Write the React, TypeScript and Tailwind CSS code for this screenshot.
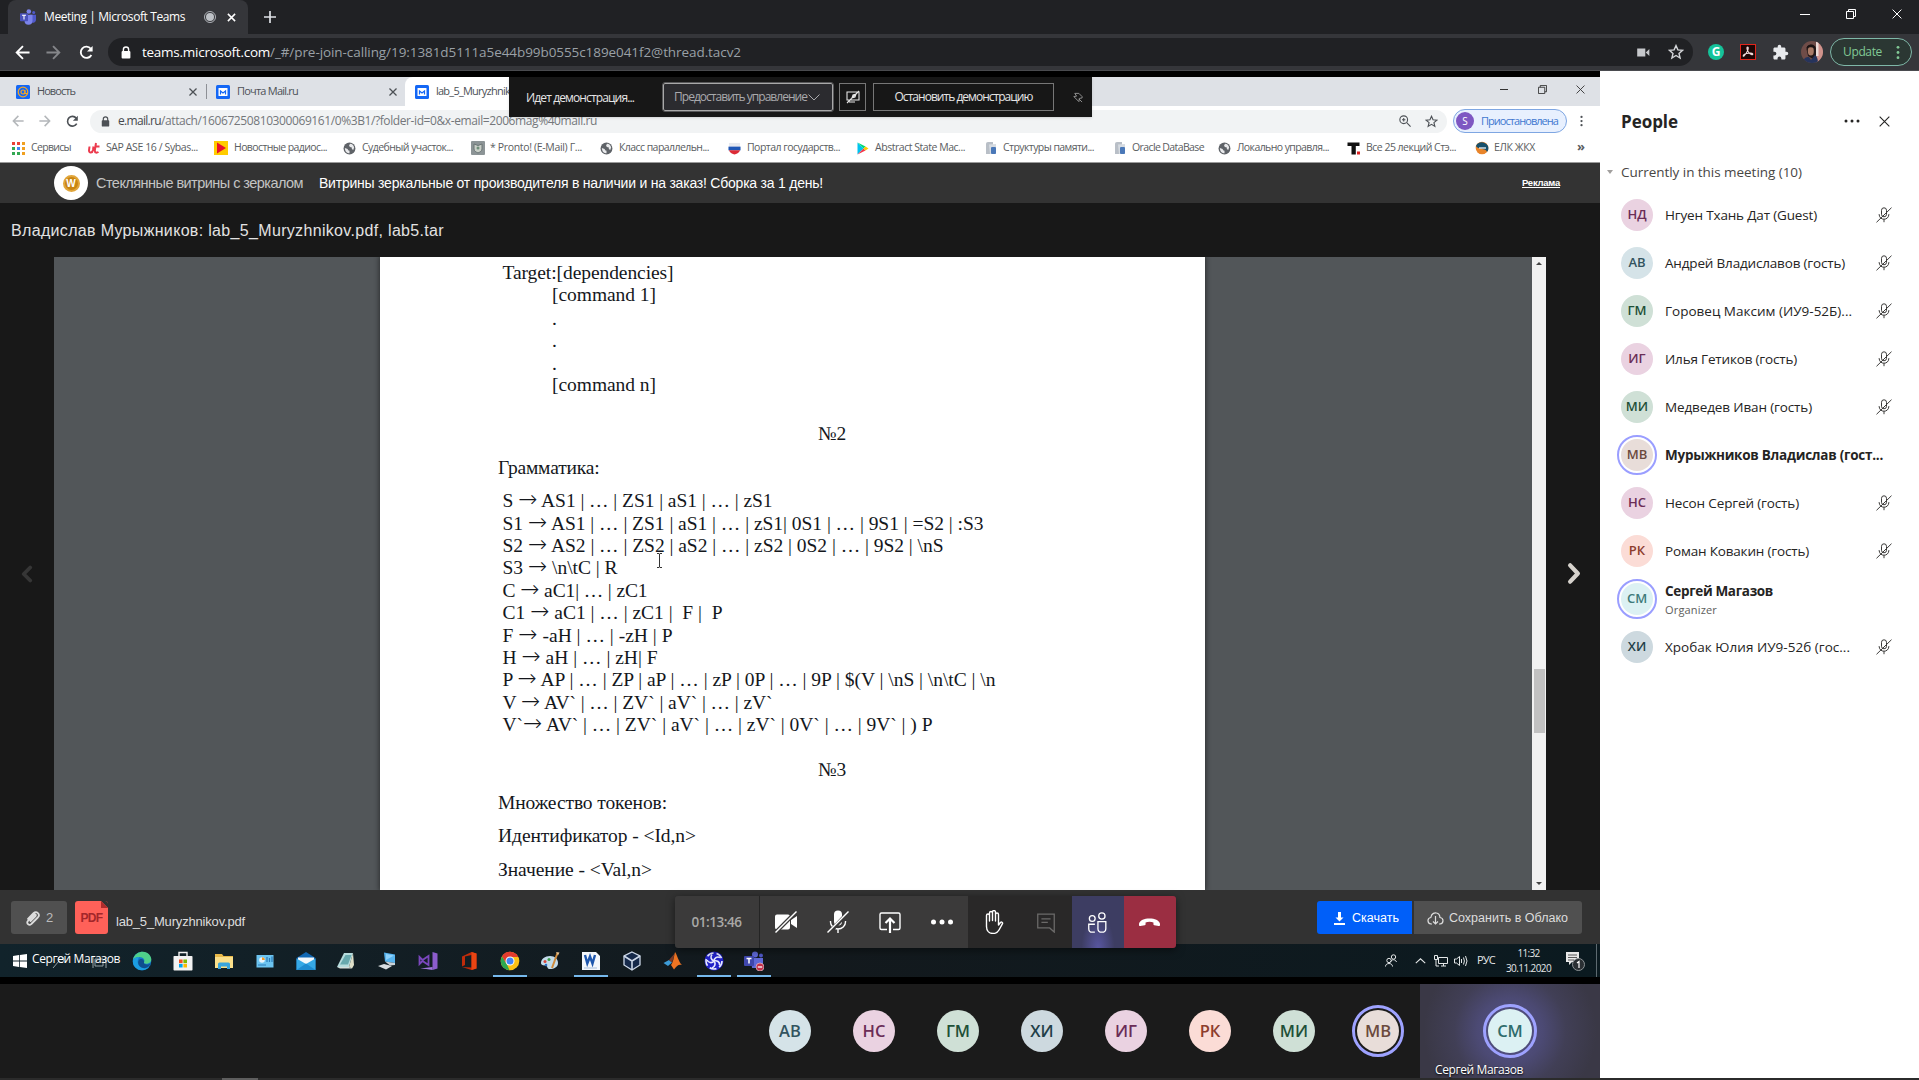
import React, { useLayoutEffect, useRef, useState } from "react";

/** Single-line label tracked so that it fills a given width; arrows come from a font with a long shaft. */
function T({ w, children, className = "" }: { w: number; children: string; className?: string }) {
  const ref = useRef<HTMLSpanElement>(null);
  const [spacing, setSpacing] = useState(0);
  useLayoutEffect(() => {
    const el = ref.current;
    if (!el) return;
    el.style.letterSpacing = "0px";
    const natural = el.getBoundingClientRect().width;
    const next = (w - natural) / children.length;
    el.style.letterSpacing = `${next}px`;
    setSpacing(next);
  }, [w, children]);
  const [head, tail] = children.split("→");
  return (
    <span ref={ref} className={`inline-block shrink-0 whitespace-pre ${className}`} style={{ letterSpacing: `${spacing}px` }}>
      {head}
      {tail !== undefined && <span className="font-['DejaVu_Sans',sans-serif] text-[23px] leading-[0] font-extralight">→</span>}
      {tail}
    </span>
  );
}

type P = { className?: string };

const Arrow = ({ className = "" }: P) => (
  <svg viewBox="0 0 16 16" className={`shrink-0 ${className}`} fill="none" stroke="currentColor" strokeWidth="2">
    <path d="M15.500 8H2M8.500 1.200 1.800 8l6.700 6.800" />
  </svg>
);
const Reload = ({ className = "" }: P) => (
  <svg viewBox="0 0 16 16" className={`shrink-0 ${className}`} fill="none" stroke="currentColor" strokeWidth="2">
    <path d="M13.2 10.6A6 6 0 1 1 12.6 4" />
    <path d="M14.5 1v6h-6z" fill="currentColor" stroke="none" />
  </svg>
);
const Lock = ({ className = "" }: P) => (
  <svg viewBox="0 0 10 13" className={`shrink-0 ${className}`}>
    <path d="M2.4 6V3.600a2.600 2.600 0 0 1 5.200 0V6" fill="none" stroke="currentColor" strokeWidth="1.400" />
    <rect x="0.6" y="5" width="8.8" height="7.4" rx="1" fill="currentColor" />
  </svg>
);
const Cross = ({ className = "" }: P) => (
  <svg viewBox="0 0 10 10" className={`shrink-0 ${className}`} stroke="currentColor" fill="none">
    <path d="M0.6 0.6l8.8 8.8M9.4 0.6L0.6 9.4" />
  </svg>
);
const Restore = ({ className = "" }: P) => (
  <svg viewBox="0 0 10 10" className={`shrink-0 ${className}`} stroke="currentColor" fill="none">
    <path d="M0.5 2.5h7v7h-7zM2.5 2.5v-2h7v7h-2" />
  </svg>
);
const Star = ({ className = "" }: P) => (
  <svg viewBox="0 0 16 16" className={`shrink-0 ${className}`} fill="none" stroke="currentColor" strokeWidth="1.400">
    <path d="M8 1.6l1.9 4.300 4.700.4-3.600 3.100 1.100 4.600L8 11.5 3.900 14 5 9.400 1.400 6.300l4.700-.4z" />
  </svg>
);
const Globe = () => (
  <svg viewBox="0 0 14 14" className="h-[13px] w-[13px] shrink-0">
    <circle cx="7" cy="7" r="6.400" fill="#5f6368" />
    <path d="M2 6.500l3 1 .5 1.500 1.500.5v2.500C4 12.500 2 10 2 6.500zM7.500 2c2.500 0 4 1.500 4.500 4l-1 2.500-1.500-1V6L7.500 5.500 6.500 4z" fill="#e9eaec" />
  </svg>
);
const DocIcon = () => (
  <svg viewBox="0 0 12 14" className="h-[14px] w-[12px] shrink-0">
    <path d="M1 2.500Q1 1 3 1h5v12H1z" fill="#b9bfc7" />
    <path d="M4 3.500L11 3v10H5z" fill="#d7dce2" />
    <rect x="6" y="6" width="5" height="7" rx="1" fill="#4a78b8" />
  </svg>
);
const MicOff = ({ className = "" }: P) => (
  <svg viewBox="0 0 16 16" className={`shrink-0 ${className}`} fill="none" stroke="currentColor" strokeWidth="1">
    <rect x="5.500" y="0.800" width="5" height="9" rx="2.500" />
    <path d="M3.200 7v.6A4.600 4.600 0 0 0 8 12.200a4.600 4.600 0 0 0 4.800-4.600V7M8 12.200v3M0.500 15.300L15.500 0.700" />
  </svg>
);
const Dots = ({ className = "" }: P) => (
  <svg viewBox="0 0 4 16" className={`shrink-0 ${className}`} fill="currentColor">
    <circle cx="2" cy="2.500" r="1.500" />
    <circle cx="2" cy="8" r="1.500" />
    <circle cx="2" cy="13.500" r="1.500" />
  </svg>
);
const MailIcon = () => (
  <svg viewBox="0 0 14 14" className="h-[14px] w-[14px] shrink-0">
    <rect width="14" height="14" rx="1.500" fill="#1467f5" />
    <rect x="2.500" y="3" width="9" height="8" rx="0.500" fill="#fff" />
    <path d="M4.500 9.500V6L7 8l2.500-2v3.500" stroke="#1467f5" strokeWidth="1.200" fill="none" />
  </svg>
);

function ChromeTop() {
  return (
    <header className="flex h-[71px] flex-col">
      <div className="flex h-[34px] items-end bg-[#202124] pl-2 text-white">
        <div className="flex h-[34px] w-[240px] items-center rounded-t-lg bg-[#35363a] pl-3">
          <svg viewBox="0 0 16 16" className="h-4 w-4 shrink-0">
            <circle cx="8.800" cy="2.500" r="2.300" fill="#7b83eb" />
            <circle cx="13.700" cy="3.600" r="1.500" fill="#5059c9" />
            <path d="M10 5.800h6v5.200a3 3 0 0 1-4 2.600z" fill="#5059c9" />
            <path d="M4.500 5.800h8v6a4 4 0 0 1-8 0z" fill="#7b83eb" />
            <rect x="0" y="4.300" width="8" height="8" rx="0.800" fill="#4b53bc" />
            <path d="M2 6.300h4M4 6.300v4.300" stroke="#fff" strokeWidth="1.100" />
          </svg>
          <T w={141} className="ml-2 text-[12px]">Meeting | Microsoft Teams</T>
          <svg viewBox="0 0 12 12" className="ml-[19px] h-3 w-3 shrink-0">
            <circle cx="6" cy="6" r="5.500" fill="none" stroke="#bdc1c6" strokeWidth="0.900" />
            <circle cx="6" cy="6" r="4" fill="#bdc1c6" />
          </svg>
          <svg viewBox="0 0 10 10" className="ml-[11px] h-[9px] w-[9px] shrink-0" stroke="#fff" strokeWidth="1.700">
            <path d="M1 1l8 8M9 1L1 9" />
          </svg>
        </div>
        <svg viewBox="0 0 12 12" className="mb-[11px] ml-[16px] h-3 w-3" stroke="#dee1e6" strokeWidth="1.700">
          <path d="M6 0v12M0 6h12" />
        </svg>
        <div className="ml-auto flex h-full items-center">
          <div className="mb-[5px] h-px w-[10px] bg-white" />
          <Restore className="mb-[6px] ml-[36px] h-[10px] w-[10px]" />
          <Cross className="mr-[17px] mb-[6px] ml-[36px] h-[10px] w-[10px]" />
        </div>
      </div>
      <div className="flex h-[37px] items-center border-b border-[#4a4b4f] bg-[#35363a] pl-[15px] text-white">
        <Arrow className="h-[15px] w-[15px]" />
        <Arrow className="ml-[16px] h-[15px] w-[15px] rotate-180 text-[#85868a]" />
        <Reload className="ml-[18px] h-[15px] w-[15px]" />
        <div className="ml-[14px] flex h-7 w-[1585px] items-center rounded-full bg-[#202124] pl-[13px]">
          <Lock className="h-[13px] w-[10px]" />
          <T w={128} className="ml-[11px] text-[13.500px]">teams.microsoft.com</T>
          <T w={471} className="text-[13.500px] text-[#9aa0a6]">/_#/pre-join-calling/19:1381d5111a5e44b99b0555c189e041f2@thread.tacv2</T>
          <svg viewBox="0 0 14 10" className="mr-[18px] ml-auto h-[9px] w-[13px]" fill="#c6c8cb">
            <path d="M0 0.500h9v9H0zM9.500 5l4-4v8z" />
          </svg>
          <Star className="mr-[9px] h-4 w-4 text-[#d4d6d9]" />
        </div>
        <div className="ml-[15px] flex h-4 w-4 items-center justify-center rounded-full bg-[#15c39a] text-[12px] leading-none font-bold text-white">G</div>
        <div className="ml-[16px] flex h-4 w-4 items-center justify-center border border-[#e1251b] bg-[#1e0606]">
          <svg viewBox="0 0 12 12" className="h-3 w-3" fill="none" stroke="#f0dcdc" strokeWidth="1.100">
            <path d="M5.500 1c1.300 0 .8 3-1 5.800S1.200 11 1.200 9.800s3-2.300 5.800-2.600 4 .4 3.800 1.200-2.300.3-4-1.800S4.400 1 5.500 1z" />
          </svg>
        </div>
        <svg viewBox="0 0 24 24" className="ml-[16px] h-[17px] w-[17px]" fill="#e8eaed">
          <path d="M20.500 11H19V7c0-1.100-.9-2-2-2h-4V3.500a2.500 2.500 0 0 0-5 0V5H4c-1.100 0-2 .9-2 2v3.800h1.500a2.700 2.700 0 0 1 0 5.400H2V20c0 1.100.9 2 2 2h3.800v-1.500a2.700 2.700 0 0 1 5.400 0V22H17c1.100 0 2-.9 2-2v-4h1.500a2.500 2.500 0 0 0 0-5z" />
        </svg>
        <svg viewBox="0 0 22 22" className="ml-[12px] h-[22px] w-[22px] shrink-0">
          <clipPath id="face"><circle cx="11" cy="11" r="11" /></clipPath>
          <g clipPath="url(#face)">
            <rect width="22" height="22" fill="#6f4c48" />
            <rect x="15" width="7" height="22" fill="#d0928c" />
            <rect x="15" y="1" width="2.500" height="14" fill="#ecdcd8" />
            <path d="M5.500 8c0-6 9.500-6 9.500 0v7l-3 3-5-3z" fill="#231818" />
            <ellipse cx="9.800" cy="10" rx="3" ry="4.600" fill="#a97a66" />
            <path d="M2 22c0-5 3-6 6-6l2 3 4-5c2 1 3 5 3 8z" fill="#26345c" />
            <path d="M5.500 7c1-4.500 8-4.500 9 .5-3-1.500-6-1.500-9-.5z" fill="#1a1212" />
          </g>
        </svg>
        <div className="ml-[7px] flex h-7 w-[82px] items-center rounded-full border border-[#7fb8a8] bg-[#2b3733] pl-3 text-[#81c995]">
          <T w={39} className="text-[12px]">Update</T>
          <Dots className="ml-[14px] h-[15px] w-1" />
        </div>
      </div>
    </header>
  );
}

const bookmarkText = "ml-[6px] text-[10.500px] text-[#5a5d61]";

function Bookmarks() {
  return (
    <div className="flex h-[29px] items-center border-b border-[#9a9a9a] bg-white pl-3">
      <div className="flex w-[76px] items-center">
        <div className="grid grid-cols-3 gap-[2px]">
          {["bg-[#ea4335]", "bg-[#ea4335]", "bg-[#f0a020]", "bg-[#34a853]", "bg-[#4285f4]", "bg-[#f0a020]", "bg-[#34a853]", "bg-[#34a853]", "bg-[#f0a020]"].map((c, i) => (
            <span key={i} className={`h-[3px] w-[3px] ${c}`} />
          ))}
        </div>
        <T w={40} className={bookmarkText}>Сервисы</T>
      </div>
      <div className="flex w-[126px] items-center">
        <svg viewBox="0 0 12 12" className="h-3 w-3 shrink-0" fill="none" stroke="#ec3b4e" strokeWidth="2">
          <path d="M1.500 4.500L1 8.500c0 3 3.500 2.500 4-.5l.5-3.500M8 1L6.800 8.500c0 2.500 2 2.500 3.700 1.500M6.500 4.500h5" />
        </svg>
        <T w={92} className={bookmarkText}>SAP ASE 16 / Sybas...</T>
      </div>
      <div className="flex w-[129px] items-center">
        <svg viewBox="0 0 14 14" className="h-[14px] w-[14px] shrink-0"><rect width="14" height="14" fill="#ffcc00" /><path d="M3 1.500L12 7l-9 5.500z" fill="#e8112d" /></svg>
        <T w={93} className={bookmarkText}>Новостные радиос...</T>
      </div>
      <div className="flex w-[128px] items-center"><Globe /><T w={91} className={bookmarkText}>Судебный участок...</T></div>
      <div className="flex w-[129px] items-center">
        <svg viewBox="0 0 14 14" className="h-[14px] w-[14px] shrink-0"><rect width="14" height="14" rx="1" fill="#8c9496" /><path d="M3 3l4 1.500L11 3v5c0 2-2 3-4 4-2-1-4-2-4-4z" fill="#c9cfc8" stroke="#6a7475" /><circle cx="7" cy="7" r="1.500" fill="#6f8f7a" /></svg>
        <T w={92} className="ml-[5px] text-[10.500px] text-[#5a5d61]">* Pronto! (E-Mail) Г...</T>
      </div>
      <div className="flex w-[128px] items-center"><Globe /><T w={90} className={bookmarkText}>Класс параллельн...</T></div>
      <div className="flex w-[129px] items-center">
        <svg viewBox="0 0 14 14" className="h-[13px] w-[13px] shrink-0"><path d="M1 1h12v4.500H1z" fill="#e6e8ef" /><path d="M0.500 5h13v4h-13z" fill="#1f56b5" /><path d="M1 9h12c-1 3-4 4-6 4.500C5 13 2 12 1 9z" fill="#dc2a35" /></svg>
        <T w={93} className={bookmarkText}>Портал государств...</T>
      </div>
      <div className="flex w-[128px] items-center">
        <svg viewBox="0 0 12 13" className="h-[13px] w-3 shrink-0"><path d="M0.500 0.500v12l6-6z" fill="#00c3f0" /><path d="M0.500 0.500l6 6 2-2z" fill="#00d977" /><path d="M0.500 12.500l6-6 2 2z" fill="#f4374a" /><path d="M8.500 4.500l-2 2 2 2 3-2z" fill="#ffcd00" /></svg>
        <T w={90} className={bookmarkText}>Abstract State Mac...</T>
      </div>
      <div className="flex w-[129px] items-center"><DocIcon /><T w={91} className={bookmarkText}>Структуры памяти...</T></div>
      <div className="flex w-[104px] items-center"><DocIcon /><T w={72} className={bookmarkText}>Oracle DataBase</T></div>
      <div className="flex w-[129px] items-center"><Globe /><T w={92} className={bookmarkText}>Локально управля...</T></div>
      <div className="flex w-[128px] items-center">
        <svg viewBox="0 0 13 13" className="h-[13px] w-[13px] shrink-0"><path d="M0.500 0.500h12V4H8.800v8.500H4.500V4h-4z" fill="#111" /><rect x="10" y="9.500" width="3" height="3" fill="#d22" /></svg>
        <T w={90} className={bookmarkText}>Все 25 лекций Стэ...</T>
      </div>
      <div className="flex w-[102px] items-center">
        <svg viewBox="0 0 14 14" className="h-[14px] w-[14px] shrink-0"><circle cx="7" cy="7" r="6.300" fill="#e8842a" /><path d="M1 5c2-5 9-5 12 0 1 3 0 5-1 6-1-4-6-2-8-4-1 0-2-.5-3-2z" fill="#17506b" /><path d="M4 7h7" stroke="#fff" strokeWidth="1.200" /></svg>
        <T w={41} className="ml-[5px] text-[10.500px] text-[#5a5d61]">ЕЛК ЖКХ</T>
      </div>
      <span className="pb-[3px] text-[13px] leading-none font-bold text-[#5a5d61]">»</span>
    </div>
  );
}

function SharedBrowserChrome() {
  return (
    <div className="relative text-[#4d5156]">
      <div className="flex h-[29px] bg-[#dee1e6]">
        <div className="flex w-[206px] items-center pl-4">
          <svg viewBox="0 0 14 14" className="h-[14px] w-[14px] shrink-0"><rect width="14" height="14" rx="1.500" fill="#1467f5" /><circle cx="7" cy="7" r="4.800" fill="none" stroke="#f5a623" strokeWidth="1.200" /><circle cx="7" cy="7" r="2" fill="none" stroke="#f5a623" strokeWidth="1.200" /><path d="M9 5v3.500h2" stroke="#f5a623" fill="none" /></svg>
          <T w={38} className="ml-[7px] text-[11px]">Новость</T>
          <Cross className="mr-[9px] ml-auto h-2 w-2 stroke-[1.600]" />
        </div>
        <div className="my-[7px] w-px bg-[#8d9096]" />
        <div className="flex w-[198px] items-center pl-[9px]">
          <MailIcon />
          <T w={61} className="ml-[7px] text-[11px]">Почта Mail.ru</T>
          <Cross className="mr-[8px] ml-auto h-2 w-2 stroke-[1.600]" />
        </div>
        <div className="flex w-[104px] items-center overflow-hidden rounded-tl-lg bg-white pl-[10px]">
          <MailIcon />
          <T w={74} className="ml-[7px] text-[11px]">lab_5_Muryzhnik</T>
        </div>
        <div className="w-[96px] bg-white" />
        <div className="ml-auto flex items-center pb-[5px] text-[#333]">
          <div className="mt-px h-px w-2 bg-[#333]" />
          <Restore className="ml-[30px] h-[9px] w-[9px]" />
          <Cross className="mr-[15px] ml-[29px] h-[9px] w-[9px]" />
        </div>
      </div>
      <div className="flex h-[28px] items-center bg-white pt-[2px] pl-3">
        <Arrow className="h-3 w-3 text-[#b4b7ba]" />
        <Arrow className="ml-[15px] h-3 w-3 rotate-180 text-[#b4b7ba]" />
        <Reload className="ml-[15px] h-[13px] w-[13px]" />
        <div className="ml-[11px] flex h-[23px] w-[1357px] items-center rounded-full bg-[#f1f3f4] pl-[11px]">
          <Lock className="h-[11px] w-[9px]" />
          <T w={43} className="ml-[8px] text-[12px] text-[#45484c]">e.mail.ru</T>
          <T w={436} className="text-[12px] text-[#74777b]">/attach/16067250810300069161/0%3B1/?folder-id=0&x-email=2006mag%40mail.ru</T>
          <svg viewBox="0 0 14 14" className="ml-auto h-3 w-3" fill="none" stroke="currentColor" strokeWidth="1.300"><circle cx="5.500" cy="5.500" r="4.500" /><path d="M9 9l4.500 4.500M3.500 5.500h4M5.500 3.500v4" /></svg>
          <Star className="mr-[9px] ml-[14px] h-[13px] w-[13px]" />
        </div>
        <div className="ml-[6px] flex h-[24px] w-[114px] items-center rounded-full border border-[#7ea6e2] bg-[#e8f0fe] pl-[2px]">
          <span className="flex h-[18px] w-[18px] items-center justify-center rounded-full bg-[#7e57c2] text-[10px] text-white">S</span>
          <T w={77} className="ml-[7px] text-[11px] text-[#3f78d0]">Приостановлена</T>
        </div>
        <Dots className="ml-[13px] h-3 w-[3px]" />
      </div>
      <Bookmarks />
      <div className="absolute top-0 left-[509px] flex h-10 w-[583px] items-center bg-[#171717] text-[#e6e6e6] shadow">
        <T w={108} className="mt-[2px] ml-[17px] text-[12px]">Идет демонстрация...</T>
        <div className="ml-[29px] flex h-[28px] w-[170px] items-center rounded-[2px] border border-[#a8a8a8] bg-[#2b2b2f] pl-[10px] text-[#a9a9ad] outline outline-[#58585a]">
          <T w={133} className="text-[12px]">Предоставить управление</T>
          <svg viewBox="0 0 12 7" className="ml-px h-[7px] w-3" fill="none" stroke="currentColor"><path d="M0.500 0.500L6 6l5.500-5.500" /></svg>
        </div>
        <div className="ml-[6px] flex h-[28px] w-[27px] items-center justify-center border border-[#777]">
          <svg viewBox="0 0 14 14" className="h-[14px] w-[14px]" fill="none" stroke="currentColor" strokeWidth="1.100"><path d="M1 2h12v8H1zM3 12h6M1 13L13 1M6 8l1-3 3-1-1 3z" /></svg>
        </div>
        <div className="ml-[7px] flex h-[28px] w-[181px] items-center justify-center border border-[#777]">
          <T w={138} className="text-[12px]">Остановить демонстрацию</T>
        </div>
        <svg viewBox="0 0 12 12" className="ml-[18px] h-[11px] w-[11px] text-[#999]" fill="none" stroke="currentColor"><path d="M3 1.500h4.500L11 5v1.500L8 7l-.5 3.500L2 5l3-.5zM7.500 7.500L11 11" /></svg>
      </div>
    </div>
  );
}

const grammar: [string, number][] = [
  ["S → AS1 | … | ZS1 | aS1 | … | zS1", 270],
  ["S1 → AS1 | … | ZS1 | aS1 | … | zS1| 0S1 | … | 9S1 | =S2 | :S3", 481],
  ["S2 → AS2 | … | ZS2 | aS2 | … | zS2 | 0S2 | … | 9S2 | \\nS", 441],
  ["S3 → \\n\\tC | R", 115],
  ["C → aC1| … | zC1", 145],
  ["C1 → aC1 | … | zC1 |  F |  P", 220],
  ["F → -aH | … | -zH | P", 170],
  ["H → aH | … | zH| F", 155],
  ["P → AP | … | ZP | aP | … | zP | 0P | … | 9P | $(V | \\nS | \\n\\tC | \\n", 493],
  ["V → AV` | … | ZV` | aV` | … | zV`", 270],
  ["V`→ AV` | … | ZV` | aV` | … | zV` | 0V` | … | 9V` | ) P", 430],
];

function PdfPage() {
  return (
    <div className="relative h-full w-[825px] overflow-hidden bg-white font-['Liberation_Serif',serif] text-[19.500px] leading-[22.400px] text-[#14171c] shadow-[0_0_5px_1px_rgba(0,0,0,0.45)]">
      <div className="flex flex-col items-start pt-[5px] pl-[122.500px]">
        <T w={171}>Target:[dependencies]</T>
        <div className="flex flex-col items-start pl-[49.500px]">
          <T w={104}>[command 1]</T>
          <span className="relative top-px">.</span>
          <span className="relative top-px">.</span>
          <span className="relative top-px">.</span>
          <T w={104}>[command n]</T>
        </div>
      </div>
      <div className="mt-[27px] flex justify-center pr-[20px]"><div className="pl-[99px]"><T w={28}>№2</T></div></div>
      <div className="mt-[11px] flex pl-[118px]"><T w={101.500}>Грамматика:</T></div>
      <div className="mt-[11px] flex flex-col items-start pl-[122.500px]">
        {grammar.map(([line, w]) => (
          <T key={line} w={w} className="h-[22.400px]">{line}</T>
        ))}
      </div>
      <div className="mt-[22px] flex justify-center pr-[20px]"><div className="pl-[99px]"><T w={28}>№3</T></div></div>
      <div className="mt-[11px] flex flex-col items-start gap-[11px] pl-[118px]">
        <T w={169}>Множество токенов:</T>
        <T w={198}>{"Идентификатор - <Id,n>"}</T>
        <T w={154}>{"Значение - <Val,n>"}</T>
      </div>
      <svg viewBox="0 0 7 15" className="absolute top-[296px] left-[276px] h-[15px] w-[7px]" fill="none" stroke="#333"><path d="M1 .5h2l.5.5.5-.5h2M3.500 1v13M1 14.500h2l.5-.5.5.5h2" /></svg>
    </div>
  );
}

function TaskIcon({ children, active = false, w = "w-[40.800px]" }: { children: React.ReactNode; active?: boolean; w?: string }) {
  return (
    <div className={`flex h-full flex-col items-center ${w}`}>
      <div className="flex flex-1 items-center pt-[2px]">
        <svg viewBox="0 0 20 20" className="h-5 w-5">{children}</svg>
      </div>
      <div className={active ? "h-[2px] w-[34px] bg-[#76b9ed]" : "h-[2px] w-[34px]"} />
    </div>
  );
}

function Taskbar() {
  return (
    <div className="relative flex h-[33px] items-center bg-gradient-to-r from-[#11232b] via-[#13191d] to-[#0b1a20] text-white">
      <div className="w-[122px] shrink-0 pl-[13px]">
        <svg viewBox="0 0 14 14" className="h-[14px] w-[14px]" fill="#fff"><path d="M0 2l6-.9v5.500H0zM6.800 1L14 0v6.600H6.800zM0 7.400h6v5.500L0 12zM6.800 7.400H14V14l-7.200-1z" /></svg>
      </div>
      <TaskIcon>
        <circle cx="10" cy="10" r="9.300" fill="#1479c9" />
        <path d="M1 9C2 3 7 .7 11 .8c5 .2 8.300 4 8.300 7.500 0 3-2.500 4.500-5 4.500-2 0-2.800-.8-2.300-1.500C13.500 9 11 6 7.500 6 4.500 6 2 7.300 1 9z" fill="#4fd08a" />
        <path d="M1 9c1-2 3.500-3 6.500-3C5 8 5 13 8 15.500s7 2 9.500 0C16 18 13 19.300 10 19.300 4 19.300 0 14 1 9z" fill="#1b9de2" />
        <path d="M8 15.500C5.500 13 5.500 9 8.500 8c2-.5 4 1 3.500 3.500-.5 1 1 2 3 2 1.500 0 2.800-.5 3.500-1-1.500 4-6.500 6.500-10.500 3z" fill="#0f4f8f" />
      </TaskIcon>
      <TaskIcon>
        <path d="M6 5V1.500h8V5" fill="none" stroke="#f2f2f2" strokeWidth="1.400" />
        <rect x="0.500" y="5" width="19" height="14.500" rx="0.800" fill="#f2f2f2" />
        <rect x="6" y="8.500" width="3.600" height="3.600" fill="#f25022" /><rect x="10.400" y="8.500" width="3.600" height="3.600" fill="#7fba00" />
        <rect x="6" y="12.900" width="3.600" height="3.600" fill="#00a4ef" /><rect x="10.400" y="12.900" width="3.600" height="3.600" fill="#ffb900" />
      </TaskIcon>
      <TaskIcon>
        <path d="M1 3h7l1.500 2H19v12H1z" fill="#e8b949" /><path d="M1 6h18v11H1z" fill="#fbe08a" /><path d="M4 18v-5q0-1.500 1.500-1.500h9q1.500 0 1.500 1.500v5h-3v-2.500H7V18z" fill="#39a5dc" />
      </TaskIcon>
      <TaskIcon>
        <rect x="1.500" y="4" width="17" height="12.500" fill="#6cc4f0" /><circle cx="7" cy="9" r="2.800" fill="#e9f5fc" /><path d="M7 9V6.200A2.800 2.800 0 0 1 9.800 9z" fill="#f39a2b" /><path d="M12 6v5M14.500 7v4M17 5.500V11M3 14h8" stroke="#2a7ab8" strokeWidth="1.200" />
      </TaskIcon>
      <TaskIcon>
        <path d="M0.500 7L10 1l9.500 6v12h-19z" fill="#1268b3" /><path d="M2 6.500h16V13H2z" fill="#f4f8fb" /><path d="M0.500 7.500L10 13l9.500-5.500V19h-19z" fill="#36a9e6" /><path d="M0.500 19L10 12.500 19.500 19z" fill="#1e8bd0" />
      </TaskIcon>
      <TaskIcon>
        <path d="M8 2h9l-4 14H1z" fill="#b6dcdd" /><path d="M9.500 4h6l-3.500 9.500H4z" fill="#68a9ae" /><path d="M17 2l1 12-2 3.500-3-1.500z" fill="#dedfc8" /><path d="M1 16h12l3 1.500H4z" fill="#d5dedb" />
      </TaskIcon>
      <TaskIcon>
        <path d="M7 1.500l11 2V12L8 10.500z" fill="#58b4ee" /><path d="M9 3l8 1.500L9 9z" fill="#8fd2fa" /><path d="M8 10.500l10 1.500v2l-5 .5z" fill="#c9d2d8" /><path d="M1 15l6-2 8 2-6 3.500z" fill="#d8dde0" />
      </TaskIcon>
      <TaskIcon>
        <path d="M14.500 1L19.500 2.500v15L14.500 19z" fill="#8c5ccc" /><path d="M2 17.500l12.500-1.500v3L8 18z" fill="#a178dc" /><path d="M1.500 6v7l3-3 6 4V5l-6 4z" fill="none" stroke="#7a47bd" strokeWidth="1.800" />
      </TaskIcon>
      <TaskIcon>
        <path d="M3 5.500L12.500 1l5 1.500v15l-5 1.500L3 16l9.500.5V4L6 5.500V14l-3 1.500z" fill="#c02b0a" /><path d="M12.500 1l5 1.500v15l-5 1.500z" fill="#ea4513" />
      </TaskIcon>
      <TaskIcon active>
        <circle cx="10" cy="10" r="9.300" fill="#fbc116" /><path d="M2 5.300L7 13.500 9.500 19.300A9.300 9.300 0 0 1 2 5.300z" fill="#2da94f" /><path d="M2 5.300A9.300 9.300 0 0 1 18.300 6H10L6 12z" fill="#e33b2e" /><circle cx="10" cy="10" r="4.500" fill="#fff" /><circle cx="10" cy="10" r="3.500" fill="#4285f4" />
      </TaskIcon>
      <TaskIcon>
        <path d="M10 5c5 0 8 3 8 7s-4 6-8 6c-3 0-2-2-3.500-3S1 15 1 12c0-4 4-7 9-7z" fill="#c3dceb" /><circle cx="5" cy="10.500" r="1.500" fill="#d6453b" /><circle cx="9" cy="8.500" r="1.500" fill="#3e9c4c" /><circle cx="6" cy="14" r="1.300" fill="#2c6dc4" /><path d="M17.500 2L12 17" stroke="#cf8a3c" strokeWidth="2" /><path d="M16 1l3.500.5-1.500 3z" fill="#e6c08c" />
      </TaskIcon>
      <TaskIcon active>
        <path d="M1 1h14l4 4v14H1z" fill="#f4f7fb" /><path d="M4 4l2.300 8.500L9 5.500l2.500 7L14 4" fill="none" stroke="#1f57ad" strokeWidth="2.400" /><path d="M3 17h13" stroke="#a9bfdd" />
      </TaskIcon>
      <TaskIcon>
        <path d="M10 1l8 4v9l-8 5-8-5V5z" fill="#16294a" stroke="#cdd8e8" strokeWidth="1.300" /><path d="M2 5l8 5 8-5M10 10v9" fill="none" stroke="#cdd8e8" strokeWidth="1.600" />
      </TaskIcon>
      <TaskIcon>
        <path d="M0.500 12L6 9l3 2.500L5 15z" fill="#3d9bd6" /><path d="M6 9l6-7-3 9.500z" fill="#7c3a2a" /><path d="M12 1c2 2 3.500 10 7 13-3-1-5 0-8 4.500L8 14c2-2 3-8 4-13z" fill="#ee7423" />
      </TaskIcon>
      <TaskIcon active>
        <circle cx="10" cy="10" r="9.500" fill="#2222c8" />
        <g fill="none" stroke="#e8eaff" strokeWidth="1.600">
          <circle cx="10" cy="10" r="8" strokeDasharray="7 3" />
          <path d="M10 10c-3-1-4-4-2-6.500M10 10c0-3 3-5 6-3.500M10 10c3-1 6 1 5.500 4M10 10c2 2.500 1 6-2 7M10 10c-2 2.500-5.500 2-7-1" />
        </g>
      </TaskIcon>
      <TaskIcon active>
        <circle cx="11" cy="3.500" r="3" fill="#5f68d8" /><circle cx="17" cy="4.500" r="2" fill="#5059c9" /><path d="M7 7h12v6c0 3-3 4-5 4H8z" fill="#5f68d8" /><rect x="0" y="5" width="10" height="10" rx="1" fill="#3f47ad" /><path d="M2.500 7.500h5M5 7.500v5" stroke="#fff" strokeWidth="1.500" /><circle cx="16" cy="16" r="4" fill="#c4314b" stroke="#e9d7dc" strokeWidth="0.600" /><path d="M13.800 16h4.400" stroke="#fff" strokeWidth="1.300" />
      </TaskIcon>
      <div className="ml-auto flex h-full items-center text-[#e4e7e8]">
        <svg viewBox="0 0 12 13" className="h-[13px] w-3" fill="none" stroke="currentColor"><circle cx="8.500" cy="3" r="2.200" /><path d="M5.500 8c1-3 5-3 6 0" /><circle cx="4" cy="6.500" r="2.200" /><path d="M0.500 12.500c0-4 7-4 7 0" /></svg>
        <svg viewBox="0 0 12 7" className="ml-[18px] h-[6px] w-[11px]" fill="none" stroke="currentColor" strokeWidth="1.300"><path d="M0.500 6L6 1l5.500 5" /></svg>
        <svg viewBox="0 0 14 12" className="ml-[8px] h-3 w-[14px]" fill="none" stroke="currentColor"><path d="M4.500 2.500h9v6h-9zM7 11h5M9.500 8.500V11M.5.500h3v4h-3zM2 4.500V11h3" /></svg>
        <svg viewBox="0 0 14 12" className="ml-[6px] h-3 w-[14px]" fill="none" stroke="currentColor"><path d="M.5 4h2L5.500 1.500v9L2.500 8h-2zM7.500 4v4M9.500 2.500q1.800 3.500 0 7M11.500 1q3 5 0 10" /></svg>
        <T w={18} className="ml-[9px] text-[11px]">РУС</T>
        <div className="ml-[11px] flex w-[45px] flex-col items-center text-[10px] leading-[15px]">
          <T w={22}>11:32</T>
          <T w={45}>30.11.2020</T>
        </div>
        <svg viewBox="0 0 20 20" className="ml-[14px] h-5 w-5"><path d="M1 1h13v10H7l-3 3v-3H1z" fill="#e8e8e8" /><path d="M3 4h9M3 6.500h9M3 9h6" stroke="#333" strokeWidth="0.800" /><circle cx="13.500" cy="13.500" r="6" fill="#2a2f33" stroke="#8d9396" /><path d="M12 12l2-1.500V17" stroke="#fff" strokeWidth="1.200" fill="none" /></svg>
        <div className="mr-[3px] ml-[11px] h-full w-px bg-[#5d6a70]" />
      </div>
      <svg viewBox="0 0 64 14" className="absolute top-[11px] left-[50px] h-[14px] w-16" fill="none" stroke="#93a1a6"><path d="M3 13L9 6M45 4h8v7h-8zM43 2v11M56 2v11" /><circle cx="11" cy="4.500" r="3" /></svg>
      <T w={88} className="absolute top-[6px] left-[32px] text-[12px] leading-[18px]">Сергей Магазов</T>
    </div>
  );
}

function CallBar() {
  const cell = "flex w-[52px] items-center justify-center";
  return (
    <div className="absolute top-[825px] left-[675px] flex h-[52px] w-[501px] overflow-hidden rounded-[3px] text-white shadow-[0_2px_8px_rgba(0,0,0,0.5)]">
      <div className="flex w-[85px] items-center justify-center border-r border-[#242424] bg-[#3b3a3a] pr-px">
        <T w={50} className="text-[13.500px] font-semibold text-[#a9a8a6]">01:13:46</T>
      </div>
      <div className="flex bg-[#3b3a3a]">
        <div className={cell}>
          <svg viewBox="0 0 24 24" className="h-6 w-6"><path d="M1 6.500q0-2 2-2h11q2 0 2 2v11q0 2-2 2H3q-2 0-2-2zM17 10l6-4v12l-6-4z" fill="#fff" /><path d="M1 23L23 1" stroke="#3b3a3a" strokeWidth="4" /><path d="M1.500 22.500l21-21" stroke="#fff" strokeWidth="1.400" /></svg>
        </div>
        <div className={cell}>
          <svg viewBox="0 0 24 24" className="h-6 w-6" fill="none"><rect x="8" y="0.500" width="8" height="15" rx="4" fill="#fff" /><path d="M4.500 11v1c0 4 3.500 7 7.500 7s7.500-3 7.500-7v-1M12 19v4" stroke="#fff" strokeWidth="1.400" /><path d="M2 24L23 1.500" stroke="#3b3a3a" strokeWidth="4" /><path d="M1.500 22.500l21-21" stroke="#fff" strokeWidth="1.400" /></svg>
        </div>
        <div className={cell}>
          <svg viewBox="0 0 24 24" className="h-6 w-6" fill="none" stroke="#fff"><path d="M9 19.500H3.500q-1.500 0-1.500-1.500V4.500Q2 3 3.500 3h17Q22 3 22 4.500V18q0 1.500-1.500 1.500H15" strokeWidth="1.400" /><path d="M12 23V9M7.500 13L12 8.500l4.500 4.500" strokeWidth="2.200" /></svg>
        </div>
        <div className={cell}>
          <svg viewBox="0 0 24 24" className="h-6 w-6" fill="#fff"><circle cx="3.500" cy="12" r="2.500" /><circle cx="12" cy="12" r="2.500" /><circle cx="20.500" cy="12" r="2.500" /></svg>
        </div>
      </div>
      <div className="flex bg-[#292828]">
        <div className={cell}>
          <svg viewBox="0 0 24 24" className="mr-[3px] h-6 w-6" fill="none" stroke="#fff" strokeWidth="1.400" strokeLinecap="round" strokeLinejoin="round"><path d="M5.500 14V5.500a1.400 1.400 0 0 1 3 0V11M8.500 11V3a1.400 1.400 0 0 1 3 0v7.500M11.500 10.500V2a1.400 1.400 0 0 1 3 0v9M14.500 11V4.500a1.400 1.400 0 0 1 3 0V15l2-2.500c1-1 2.500 0 2 1.200l-3.500 6.300c-1.200 2.200-3 3.500-6 3.500-4 0-6.500-3-6.500-7V14" /></svg>
        </div>
        <div className={cell}>
          <svg viewBox="0 0 24 24" className="h-[22px] w-[22px]" fill="none" stroke="#6b6a69" strokeWidth="1.400"><path d="M3 3.500h18v19.500l-5-4.500H3zM7 8.500h10M7 12.500h7" /></svg>
        </div>
      </div>
      <div className={`${cell} bg-[radial-gradient(ellipse_at_bottom,#5856a0_0%,#3d3d62_45%)]`}>
        <svg viewBox="0 0 24 24" className="mr-px h-[21px] w-[21px]" fill="none" stroke="#fff" strokeWidth="1.500"><circle cx="6" cy="7.500" r="3.300" /><circle cx="17" cy="4.500" r="3.600" /><path d="M9 14H2v5c0 2.500 2 4 4 4h3M12.500 11h9v8c0 2.500-2 4-4.500 4s-4.500-1.500-4.500-4z" /></svg>
      </div>
      <div className={`${cell} bg-[#9b2e42]`}>
        <svg viewBox="0 0 24 24" className="mr-px h-[21px] w-[21px]" fill="#fff"><path d="M0 13.500C1 9.500 6 7.500 12 7.500s11 2 12 6v1.300c0 .9-.6 1.400-1.500 1.200l-5-.8c-.7-.1-1-.6-1-1.200v-2c-2.800-1-6.200-1-9 0v2c0 .6-.3 1.100-1 1.200l-5 .8C.6 16.200 0 15.700 0 14.800z" /></svg>
      </div>
    </div>
  );
}

const tiles: [string, string][] = [
  ["АВ", "bg-[#d5e3e8] text-[#33545f]"],
  ["НС", "bg-[#ead2e1] text-[#6b2d57]"],
  ["ГМ", "bg-[#cfe0d6] text-[#1f5038]"],
  ["ХИ", "bg-[#cdd9df] text-[#223f48]"],
  ["ИГ", "bg-[#ead2e1] text-[#6b2d57]"],
  ["РК", "bg-[#fbdcd6] text-[#8d3d2d]"],
  ["МИ", "bg-[#cfe0d6] text-[#1f5038]"],
];

function Tiles() {
  return (
    <div className="flex h-[94px] bg-[#1b1b1b]">
      <div className="ml-auto flex items-center">
        {tiles.map(([t, c]) => (
          <div key={t} className="flex w-[84px] justify-center">
            <span className={`flex h-[42px] w-[42px] items-center justify-center rounded-full text-[16.500px] font-semibold ${c}`}>{t}</span>
          </div>
        ))}
        <div className="flex w-[84px] justify-center">
          <div className="flex h-[52px] w-[52px] items-center justify-center rounded-full border-3 border-[#9ea2ff]">
            <span className="flex h-[42px] w-[42px] items-center justify-center rounded-full bg-[#e8ddd9] text-[16.500px] font-semibold text-[#6b4a3e]">МВ</span>
          </div>
        </div>
      </div>
      <div className="relative flex w-[180px] items-center justify-center bg-[radial-gradient(circle_at_center,#55538a_0%,#4c4a74_32%,#413f56_55%,#3a3846_85%)]">
        <div className="flex h-[54px] w-[54px] items-center justify-center rounded-full border-[3px] border-[#9ea2ff]">
          <span className="flex h-11 w-11 items-center justify-center rounded-full bg-[#dcf1f3] text-[16.500px] font-semibold text-[#2f6c6c]">СМ</span>
        </div>
        <T w={88} className="absolute bottom-[-1px] left-[15px] text-[12px] leading-[18px] text-white [text-shadow:0_1px_2px_#000]">Сергей Магазов</T>
      </div>
    </div>
  );
}

function Stage() {
  return (
    <main className="relative flex w-[1600px] flex-col bg-black pt-[6px]">
      <SharedBrowserChrome />
      <div className="flex h-[40px] items-center bg-[#333] pl-[54px] font-['Liberation_Sans',sans-serif]">
        <div className="flex h-[34px] w-[34px] items-center justify-center rounded-full bg-white">
          <span className="flex h-[17px] w-[17px] items-center justify-center rounded-full border-2 border-[#e0a53a] bg-[#c98512] text-[10px] font-bold text-white">W</span>
        </div>
        <T w={207} className="mt-px ml-2 text-[14.500px] text-[#c4c4c4]">Стеклянные витрины с зеркалом</T>
        <T w={504} className="ml-[16px] text-[14px] text-white">Витрины зеркальные от производителя в наличии и на заказ! Сборка за 1 день!</T>
        <T w={38} className="mr-[40px] ml-auto text-[9.500px] font-bold text-white underline">Реклама</T>
      </div>
      <div className="flex h-[54px] items-center bg-[#181818] pt-[2px] pl-[11px] font-['Liberation_Sans',sans-serif]">
        <T w={433} className="text-[16px] text-[#e2e2e2]">Владислав Мурыжников: lab_5_Muryzhnikov.pdf, lab5.tar</T>
      </div>
      <div className="flex h-[633px] bg-[#181818]">
        <div className="flex w-[52px] items-center justify-center">
          <svg viewBox="0 0 14 18" className="h-[18px] w-[13px]" fill="none" stroke="#363636" strokeWidth="4" strokeLinecap="round" strokeLinejoin="round"><path d="M11 2L4 9l7 7" /></svg>
        </div>
        <div className="ml-[2px] flex w-[1478px] overflow-hidden bg-[#525659] pl-[326px]"><PdfPage /></div>
        <div className="flex w-[14px] flex-col items-center bg-[#f1f1f1] py-[5px]">
          <svg viewBox="0 0 6 3" className="h-[3px] w-[6px]" fill="#444"><path d="M0 3l3-3 3 3z" /></svg>
          <div className="mt-[404px] h-[64px] w-[11px] bg-[#c1c1c1]" />
          <svg viewBox="0 0 6 3" className="mt-auto h-[3px] w-[6px]" fill="#444"><path d="M0 0l3 3 3-3z" /></svg>
        </div>
        <div className="flex w-[54px] items-center pl-[21px]">
          <svg viewBox="0 0 14 24" className="h-[23px] w-[14px]" fill="none" stroke="#d6d2cc" strokeWidth="4.500" strokeLinecap="round" strokeLinejoin="round"><path d="M3 3.500l8 8.500-8 8.500" /></svg>
        </div>
      </div>
      <div className="flex h-[54px] items-center bg-[#323232] pl-[11px] font-['Liberation_Sans',sans-serif] text-[#ddd]">
        <div className="mt-px flex h-[33px] w-[56px] items-center rounded-[3px] bg-[#505050] pl-[14px]">
          <svg viewBox="0 0 15 15" className="mt-px h-[15px] w-[15px]" fill="none" stroke="currentColor" strokeWidth="1.800" strokeLinecap="round"><path d="M5.500 10l5-5c1-1-.3-2.300-1.300-1.300L3 9.800c-2.300 2.300 1.200 5.400 3.300 3.200L12.800 6.500c3-3.200-1.300-7-4.300-4.300L3 7.800" /></svg>
          <T w={7} className="ml-[6px] text-[13px] text-[#bbb]">2</T>
        </div>
        <div className="relative mt-px ml-2 flex h-[33px] w-[33px] items-center justify-center overflow-hidden rounded-[3px] bg-[#ff6159] text-[12px] font-bold text-[#a3262a]">
          <T w={22}>PDF</T>
          <svg viewBox="0 0 8 8" className="absolute top-0 right-0 h-[7px] w-[7px]"><path d="M0 0h8v8z" fill="#323232" /><path d="M0 0l8 8H0z" fill="#b02b2b" /></svg>
        </div>
        <T w={129} className="mt-[10px] ml-2 text-[13px]">lab_5_Muryzhnikov.pdf</T>
        <div className="mt-px mr-[18px] ml-auto flex h-[33px] overflow-hidden rounded-[3px]">
          <div className="flex w-[95px] items-center bg-[#005ff9] pt-[2px] pl-[17px] text-white">
            <svg viewBox="0 0 11 13" className="h-[13px] w-[11px]" fill="#fff"><path d="M4 0h3v5.500h2.500l-4 4-4-4H4zM0 11h11v2H0z" /></svg>
            <T w={47} className="ml-[7px] text-[12.500px]">Скачать</T>
          </div>
          <div className="ml-[2px] flex w-[168px] items-center bg-[#505050] pt-[2px] pl-[13px]">
            <svg viewBox="0 0 17 13" className="h-[13px] w-[17px]" fill="none" stroke="currentColor" strokeWidth="1.200"><path d="M5 12H4c-4-.5-4-6-.2-6.500C4.500 1 8 .5 9.500 1c2 .3 3.300 2 3.500 4.500 4 .5 4 6 0 6.500h-1M8.500 4v8M6 9.500l2.500 2.500L11 9.500" /></svg>
            <T w={119} className="ml-[5px] text-[12.500px]">Сохранить в Облако</T>
          </div>
        </div>
      </div>
      <Taskbar />
      <div className="h-[7px] bg-black" />
      <Tiles />
      <CallBar />
    </main>
  );
}

type Person = { i: string; c: string; n: string; w: number; kind?: "speaking" | "organizer" };
const people: Person[] = [
  { i: "НД", c: "bg-[#ead2e1] text-[#6b2d57]", n: "Нгуен Тхань Дат (Guest)", w: 152 },
  { i: "АВ", c: "bg-[#d5e3e8] text-[#33545f]", n: "Андрей Владиславов (гость)", w: 180 },
  { i: "ГМ", c: "bg-[#cfe0d6] text-[#1f5038]", n: "Горовец Максим (ИУ9-52Б)...", w: 187 },
  { i: "ИГ", c: "bg-[#ead2e1] text-[#6b2d57]", n: "Илья Гетиков (гость)", w: 132 },
  { i: "МИ", c: "bg-[#cfe0d6] text-[#1f5038]", n: "Медведев Иван (гость)", w: 147 },
  { i: "МВ", c: "bg-[#e8ddd9] text-[#6b4a3e]", n: "Мурыжников Владислав (гост...", w: 218, kind: "speaking" },
  { i: "НС", c: "bg-[#ead2e1] text-[#6b2d57]", n: "Несон Сергей (гость)", w: 134 },
  { i: "РК", c: "bg-[#fbdcd6] text-[#8d3d2d]", n: "Роман Ковакин (гость)", w: 144 },
  { i: "СМ", c: "bg-[#dcf1f3] text-[#3f7a7a]", n: "Сергей Магазов", w: 108, kind: "organizer" },
  { i: "ХИ", c: "bg-[#cdd9df] text-[#223f48]", n: "Хробак Юлия ИУ9-52б (гос...", w: 185 },
];

function PeoplePanel() {
  return (
    <aside className="flex w-[319px] flex-col bg-white text-[#252423]">
      <div className="mt-[36px] flex h-7 items-center pl-[21px]">
        <T w={57} className="mt-[2px] text-[17px] font-bold">People</T>
        <svg viewBox="0 0 16 4" className="mr-[19px] ml-auto h-1 w-4" fill="#252423"><circle cx="2" cy="2" r="1.500" /><circle cx="8" cy="2" r="1.500" /><circle cx="14" cy="2" r="1.500" /></svg>
        <Cross className="mr-[29px] h-[11px] w-[11px]" />
      </div>
      <div className="mt-[25px] flex h-6 items-center pl-[7px] text-[#484644]">
        <svg viewBox="0 0 6 4" className="h-1 w-[6px]" fill="#a19f9d"><path d="M0 0h6L3 4z" /></svg>
        <T w={181} className="ml-[8px] text-[13.500px]">Currently in this meeting (10)</T>
      </div>
      <ul className="mt-[7px]">
        {people.map((p) => (
          <li key={p.n} className="flex h-12 items-center pl-[17px]">
            <div className={p.kind ? "flex h-10 w-10 items-center justify-center rounded-full border-2 border-[#9a9eff]" : "flex h-10 w-10 items-center justify-center"}>
              <span className={`flex h-8 w-8 items-center justify-center rounded-full text-[13px] font-semibold ${p.c}`}>{p.i}</span>
            </div>
            <div className="ml-2 flex flex-col items-start">
              <T w={p.w} className={p.kind ? "text-[13.500px] leading-[20px] font-bold" : "text-[13.500px] leading-[20px]"}>{p.n}</T>
              {p.kind === "organizer" && <T w={52} className="mt-px -mb-px text-[11px] leading-[16px] text-[#605e5c]">Organizer</T>}
            </div>
            {!p.kind && <MicOff className="mr-[27px] ml-auto h-4 w-4 text-[#3b3a39]" />}
          </li>
        ))}
      </ul>
    </aside>
  );
}

export default function App() {
  return (
    <div className="flex h-[1080px] w-[1919px] flex-col overflow-hidden bg-black font-['Open_Sans',sans-serif]">
      <ChromeTop />
      <div className="flex h-[1007px]">
        <Stage />
        <PeoplePanel />
      </div>
      <div className="flex h-[2px] bg-[#2b2b2b] pl-[222px]"><div className="w-[36px] bg-[#5e5e5e]" /></div>
    </div>
  );
}
